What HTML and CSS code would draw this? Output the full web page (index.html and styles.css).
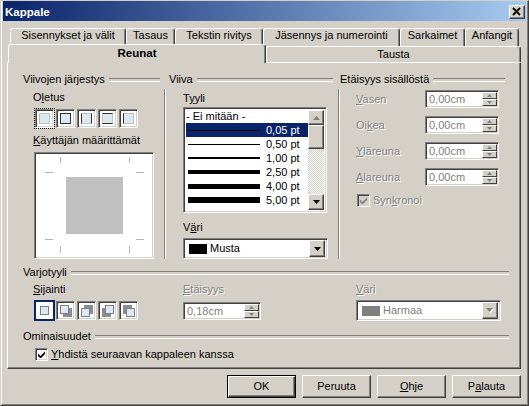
FILE: index.html
```html
<!DOCTYPE html>
<html lang="fi">
<head>
<meta charset="utf-8">
<title>Kappale</title>
<link rel="stylesheet" href="styles.css">
</head>
<body>
<div class="window">
 <div class="frame">
  <div class="titlebar">
   <span class="title">Kappale</span>
   <span class="close raised"><svg width="14" height="12" viewBox="0 0 14 12"><path d="M3 2 L10 9 M10 2 L3 9" stroke="#000" stroke-width="1.8" fill="none"/></svg></span>
  </div>

  <div class="tabs">
   <div class="tabrow back">
    <div class="tab t1">Sisennykset ja välit</div>
    <div class="tab t2">Tasaus</div>
    <div class="tab t3">Tekstin rivitys</div>
    <div class="tab t4">Jäsennys ja numerointi</div>
    <div class="tab t5">Sarkaimet</div>
    <div class="tab t6">Anfangit</div>
   </div>
   <div class="tabrow front">
    <div class="tab active">Reunat</div>
    <div class="tab t8">Tausta</div>
   </div>
  </div>

  <div class="panel">
   <div class="top">
    <div class="col col1">
     <div class="ghead"><span>Viivojen järjestys</span></div>
     <div class="c1body">
      <div class="lbl first">O<u>l</u>etus</div>
      <div class="presets">
       <div class="pbox focus"><span class="pin"></span></div>
       <div class="pbox"><span class="pin p-all"></span></div>
       <div class="pbox"><span class="pin p-lr"></span></div>
       <div class="pbox"><span class="pin p-tb"></span></div>
       <div class="pbox"><span class="pin p-l"></span></div>
      </div>
      <div class="lbl second"><u>K</u>äyttäjän määrittämät</div>
      <div class="userbox sunken">
       <svg width="116" height="103" viewBox="0 0 116 103">
        <rect x="29" y="22" width="57" height="57" fill="#C0C0C0"/>
        <g stroke="#B4B4B4" stroke-width="1">
         <path d="M23.5 2 V8 M92.5 2 V8 M23.5 91 V98 M92.5 91 V98"/>
         <path d="M8 17.5 H16 M99 17.5 H107 M8 84.5 H16 M99 84.5 H107"/>
        </g>
       </svg>
      </div>
     </div>
    </div>
    <div class="vsep"></div>
    <div class="col col2">
     <div class="ghead"><span>Viiva</span></div>
     <div class="c2body">
      <div class="lbl first">T<u>y</u>yli</div>
      <div class="listbox sunken">
       <div class="rows">
        <div class="row none">- Ei mitään -</div>
        <div class="row sel"><span class="ln w1"></span><span>0,05 pt</span></div>
        <div class="row"><span class="ln w1"></span><span>0,50 pt</span></div>
        <div class="row"><span class="ln w2"></span><span>1,00 pt</span></div>
        <div class="row"><span class="ln w4"></span><span>2,50 pt</span></div>
        <div class="row"><span class="ln w5"></span><span>4,00 pt</span></div>
        <div class="row"><span class="ln w6"></span><span>5,00 pt</span></div>
        <div class="row"><span class="ln dbl"></span><span>1,10 pt</span></div>
       </div>
       <div class="vscroll">
        <span class="sbtn up raised"><svg width="7" height="4" viewBox="0 0 7 4"><polygon points="3.5,0 7,4 0,4" fill="#808080"/></svg></span>
        <span class="thumb raised"></span>
        <span class="track"></span>
        <span class="sbtn raised"><svg width="7" height="4" viewBox="0 0 7 4"><polygon points="0,0 7,0 3.5,4" fill="#000"/></svg></span>
       </div>
      </div>
      <div class="lbl third">V<u>ä</u>ri</div>
      <div class="combo sunken">
       <span class="swatch black"></span>
       <span>Musta</span>
       <span class="ddbtn raised"><svg width="7" height="4" viewBox="0 0 7 4"><polygon points="0,0 7,0 3.5,4" fill="#000"/></svg></span>
      </div>
     </div>
    </div>
    <div class="vsep"></div>
    <div class="col col3">
     <div class="ghead"><span>Etäisyys sisällöstä</span></div>
     <div class="c3body">
      <div class="frow"><span class="lbl dis"><u>V</u>asen</span>
       <div class="spin sunken"><span class="val">0,00cm</span><span class="spinbtns"><span class="sb"><svg width="5" height="3" viewBox="0 0 5 3"><polygon points="2.5,0 5,3 0,3" fill="#808080"/></svg></span><span class="sb"><svg width="5" height="3" viewBox="0 0 5 3"><polygon points="0,0 5,0 2.5,3" fill="#808080"/></svg></span></span></div>
      </div>
      <div class="frow"><span class="lbl dis">Oi<u>k</u>ea</span>
       <div class="spin sunken"><span class="val">0,00cm</span><span class="spinbtns"><span class="sb"><svg width="5" height="3" viewBox="0 0 5 3"><polygon points="2.5,0 5,3 0,3" fill="#808080"/></svg></span><span class="sb"><svg width="5" height="3" viewBox="0 0 5 3"><polygon points="0,0 5,0 2.5,3" fill="#808080"/></svg></span></span></div>
      </div>
      <div class="frow"><span class="lbl dis"><u>Y</u>läreuna</span>
       <div class="spin sunken"><span class="val">0,00cm</span><span class="spinbtns"><span class="sb"><svg width="5" height="3" viewBox="0 0 5 3"><polygon points="2.5,0 5,3 0,3" fill="#808080"/></svg></span><span class="sb"><svg width="5" height="3" viewBox="0 0 5 3"><polygon points="0,0 5,0 2.5,3" fill="#808080"/></svg></span></span></div>
      </div>
      <div class="frow"><span class="lbl dis"><u>A</u>lareuna</span>
       <div class="spin sunken"><span class="val">0,00cm</span><span class="spinbtns"><span class="sb"><svg width="5" height="3" viewBox="0 0 5 3"><polygon points="2.5,0 5,3 0,3" fill="#808080"/></svg></span><span class="sb"><svg width="5" height="3" viewBox="0 0 5 3"><polygon points="0,0 5,0 2.5,3" fill="#808080"/></svg></span></span></div>
      </div>
      <div class="chkrow sync">
       <span class="chk off"><svg width="7" height="7" viewBox="0 0 7 7"><polygon points="0,2.5 2.5,5 7,0.5 7,3 2.5,7.5 0,5" fill="#808080"/></svg></span>
       <span class="dis">Syn<u>k</u>ronoi</span>
      </div>
     </div>
    </div>
   </div>

   <div class="ghead sec"><span>Varjotyyli</span></div>
   <div class="shadowrow">
    <div class="scell s1">
     <div class="lbl"><u>S</u>ijainti</div>
     <div class="presets">
      <div class="pbox sel"><span class="pin sp"></span></div>
      <div class="pbox"><span class="pin sp sh-br"></span></div>
      <div class="pbox"><span class="pin sp sh-tr"></span></div>
      <div class="pbox"><span class="pin sp sh-bl"></span></div>
      <div class="pbox"><span class="pin sp sh-tl"></span></div>
     </div>
    </div>
    <div class="scell s2">
     <div class="lbl dis"><u>E</u>täisyys</div>
     <div class="spin wide sunken"><span class="val">0,18cm</span><span class="spinbtns"><span class="sb"><svg width="5" height="3" viewBox="0 0 5 3"><polygon points="2.5,0 5,3 0,3" fill="#808080"/></svg></span><span class="sb"><svg width="5" height="3" viewBox="0 0 5 3"><polygon points="0,0 5,0 2.5,3" fill="#808080"/></svg></span></span></div>
    </div>
    <div class="scell s3">
     <div class="lbl dis"><u>V</u>äri</div>
     <div class="combo sunken disabled">
      <span class="swatch gray"></span>
      <span>Harmaa</span>
      <span class="ddbtn raised"><svg width="8" height="5" viewBox="0 0 8 5"><polygon points="1,1 8,1 4.5,5" fill="#fff"/><polygon points="0,0 7,0 3.5,4" fill="#808080"/></svg></span>
     </div>
    </div>
   </div>

   <div class="ghead sec sec2"><span>Ominaisuudet</span></div>
   <div class="chkrow keep">
    <span class="chk"><svg width="7" height="7" viewBox="0 0 7 7"><polygon points="0,2.5 2.5,5 7,0.5 7,3 2.5,7.5 0,5" fill="#000"/></svg></span>
    <span><u>Y</u>hdistä seuraavan kappaleen kanssa</span>
   </div>
  </div>

  <div class="btnrow">
   <div class="btn def">OK</div>
   <div class="btn">Peruuta</div>
   <div class="btn"><u>O</u>hje</div>
   <div class="btn">P<u>a</u>lauta</div>
  </div>
 </div>
</div>
</body>
</html>
```

FILE: styles.css
```css
* { box-sizing: border-box; margin: 0; padding: 0; }
body { background: #D4D0C8; font: 11px/13px "Liberation Sans", Arial, sans-serif; color: #000; }
u { text-decoration: underline; text-underline-offset: 1px; }

.window { width: 529px; height: 406px; border: 1px solid; border-color: #D4D0C8 #404040 #404040 #D4D0C8; }
.frame { height: 100%; border: 1px solid; border-color: #fff #808080 #808080 #fff; border-top: 0; padding: 0 1px 1px; }

.raised { border: 1px solid; border-color: #fff #404040 #404040 #fff; box-shadow: inset -1px -1px #808080; background: #D4D0C8; }
.sunken { border: 1px solid; border-color: #808080 #fff #fff #808080; box-shadow: inset 1px 1px #404040, inset -1px -1px #D4D0C8; }

.titlebar { height: 20px; display: flex; justify-content: space-between; align-items: flex-start; background: linear-gradient(90deg, #0A246A, #A6CAF0); padding: 0 1px; }
.title { color: #fff; font-weight: bold; font-size: 11.5px; line-height: 13px; margin: 5px 0 0 1px; }
.close { width: 16px; height: 14px; margin-top: 4px; display: flex; align-items: center; justify-content: center; }
.close svg { display: block; }

.tabs { margin: 7px 0 0 4px; }
.tabrow { display: flex; }
.back { margin-left: 3px; height: 18px; }
.front { height: 16px; }
.tab { height: 100%; border: 1px solid #fff; border-right-color: #404040; border-bottom: 0; border-radius: 3px 3px 0 0; box-shadow: inset -1px 0 #808080; text-align: center; white-space: nowrap; background: #D4D0C8; }
.t1 { width: 116px; } .t2 { width: 49px; } .t3 { width: 88px; } .t4 { width: 137px; } .t5 { width: 65px; } .t6 { width: 54px; }
.front .tab { padding-top: 1px; }
.front .active { position: relative; z-index: 1; width: 258px; height: 19px; margin: -2px 0 0 1px; padding-top: 2px; font-weight: bold; font-size: 11.5px; }
.t8 { width: 255px; }

.panel { margin-left: 4px; width: 514px; height: 307px; border: 1px solid; border-color: #fff #404040 #404040 #fff; box-shadow: inset -1px -1px #808080; padding-top: 10px; }

.ghead { display: flex; align-items: center; white-space: nowrap; }
.ghead::after { content: ""; flex: 1; height: 2px; border-top: 1px solid #808080; border-bottom: 1px solid #fff; margin-left: 4px; }

.top { display: flex; padding-left: 15px; }
.col1 { width: 141px; }
.col1 .ghead { margin-right: 4px; }
.vsep { width: 2px; height: 170px; margin-top: 16px; border-left: 1px solid #808080; border-right: 1px solid #fff; }
.col2 { width: 172px; }
.col2 .ghead { margin: 0 5px 0 3px; }
.col3 { width: 167px; }
.col3 .ghead { margin-right: 2px; }

.lbl { display: block; white-space: nowrap; }
.dis { color: #808080; text-shadow: 1px 1px 0 #fff; }

.c1body { padding-left: 10px; }
.c1body .first { margin-top: 5px; }
.c1body .second { margin-top: 6px; }
.presets { display: flex; gap: 2px; padding-left: 2px; margin-top: 5px; }
.pbox { width: 19px; height: 19px; border: 1px solid; border-color: #808080 #fff #fff #808080; box-shadow: inset 1px 1px #404040, inset -1px -1px #D4D0C8; background: #fff; display: flex; align-items: center; justify-content: center; }
.pbox.focus { outline: 1px dotted #000; }
.pbox.sel { border-color: #0A246A; box-shadow: 0 0 0 1px #0A246A, inset 1px 1px #fff, inset -1px -1px #fff; }
.pin { display: block; width: 11px; height: 11px; border: 1px solid #B8C0C8; background: #DFE7EF; }
.p-all { border-color: #303030; }
.p-lr { border-left-color: #303030; border-right-color: #303030; }
.p-tb { border-top-color: #303030; border-bottom-color: #303030; }
.p-l { border-left-color: #303030; }
.pin.sp { width: 9px; height: 9px; border-color: #7A8088; }
.sh-br { box-shadow: 3px 3px 0 #8C8C8C; margin: 0 3px 3px 0; }
.sh-tr { box-shadow: 3px -3px 0 #8C8C8C; margin: 3px 3px 0 0; }
.sh-bl { box-shadow: -3px 3px 0 #8C8C8C; margin: 0 0 3px 3px; }
.sh-tl { box-shadow: -3px -3px 0 #8C8C8C; margin: 3px 0 0 3px; }

.userbox { width: 120px; height: 107px; margin: 5px 0 0 1px; background: #fff; padding: 2px; }
.userbox svg { display: block; }

.c2body { padding-left: 17px; }
.c2body .first { margin-top: 6px; }
.c2body .third { margin-top: 8px; }
.listbox { display: flex; width: 144px; height: 106px; margin-top: 2px; background: #fff; padding: 2px; overflow: hidden; }
.rows { flex: 1; overflow: hidden; margin-top: -1px; }
.row { height: 14px; display: flex; align-items: center; padding-left: 2px; white-space: nowrap; }
.row.none { padding-left: 0; }
.row.sel { background: #0A246A; color: #fff; }
.ln { display: block; width: 72px; background: #000; margin-right: 6px; flex: none; }
.w1 { height: 1px; } .w2 { height: 2px; } .w4 { height: 4px; } .w5 { height: 5px; } .w6 { height: 6px; }
.dbl { height: 4px; background: none; border-top: 1px solid #000; border-bottom: 1px solid #000; }
.vscroll { width: 16px; display: flex; flex-direction: column; background: repeating-conic-gradient(#fff 0 25%, #D4D0C8 0 50%) 0 0 / 2px 2px; }
.sbtn { height: 16px; display: flex; align-items: center; justify-content: center; flex: none; }
.sbtn.up { height: 15px; }
.thumb { height: 24px; flex: none; }
.track { flex: 1; }

.combo { width: 145px; height: 21px; margin-top: 4px; background: #fff; display: flex; align-items: center; padding: 2px 2px 2px 5px; white-space: nowrap; }
.swatch { width: 18px; height: 10px; margin-right: 3px; flex: none; }
.swatch.black { background: #000; }
.swatch.gray { background: #808080; }
.combo .ddbtn { margin-left: auto; width: 16px; height: 17px; display: flex; align-items: center; justify-content: center; flex: none; }
.combo.disabled { color: #808080; }

.c3body { padding-left: 16px; margin-top: 4px; display: flex; flex-direction: column; gap: 8px; }
.frow { display: flex; align-items: center; height: 18px; }
.frow .lbl { width: 69px; }
.spin { width: 74px; height: 18px; background: #fff; display: flex; align-items: center; padding: 2px 1px 2px 3px; color: #808080; }
.spin.wide { width: 78px; }
.spin .val { flex: 1; }
.spinbtns { width: 15px; height: 14px; display: flex; flex-direction: column; flex: none; }
.sb { flex: 1; display: flex; align-items: center; justify-content: center; background: #D4D0C8; border: 1px solid; border-color: #fff #404040 #404040 #fff; }
.sb svg { display: block; }

.chkrow { display: flex; align-items: center; gap: 3px; white-space: nowrap; }
.sync { margin-left: 1px; }
.chk { width: 13px; height: 13px; border: 1px solid; border-color: #808080 #fff #fff #808080; box-shadow: inset 1px 1px #404040, inset -1px -1px #D4D0C8; background: #fff; display: flex; align-items: center; justify-content: center; flex: none; }
.chk.off { background: #D4D0C8; }
.chk svg { display: block; }

.sec { margin: 7px 11px 0 15px; }
.sec2 { margin-top: 9px; }
.shadowrow { display: flex; margin: 4px 0 0 25px; }
.s1 { width: 150px; }
.s2 { width: 173px; }
.s2 .spin { margin-top: 6px; }
.keep { margin: 5px 0 0 27px; }

.btnrow { display: flex; justify-content: flex-end; gap: 6px; margin: 6px 5px 0 0; }
.btn { width: 69px; height: 23px; border: 1px solid; border-color: #fff #404040 #404040 #fff; box-shadow: inset -1px -1px #808080; background: #D4D0C8; display: flex; align-items: center; justify-content: center; }
.btn.def { border-color: #000; box-shadow: inset 1px 1px #fff, inset -1px -1px #404040, inset -2px -2px #808080; }
```
